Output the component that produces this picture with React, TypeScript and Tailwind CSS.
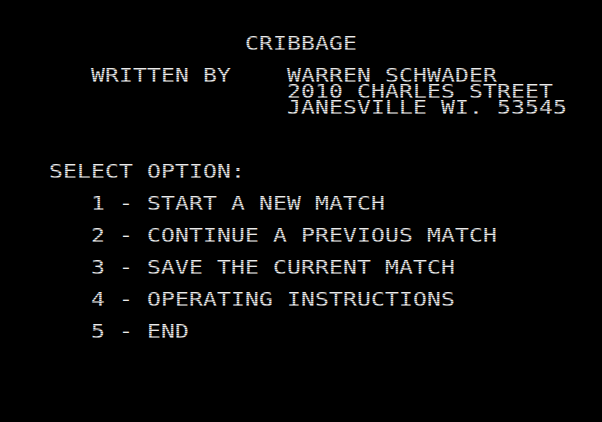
import React from "react";

const ROWS: string[] = [
  "",
  "                CRIBBAGE",
  "",
  "     WRITTEN BY    WARREN SCHWADER",
  "                   2010 CHARLES STREET",
  "                   JANESVILLE WI. 53545",
  "",
  "",
  "",
  "  SELECT OPTION:",
  "",
  "     1 - START A NEW MATCH",
  "",
  "     2 - CONTINUE A PREVIOUS MATCH",
  "",
  "     3 - SAVE THE CURRENT MATCH",
  "",
  "     4 - OPERATING INSTRUCTIONS",
  "",
  "     5 - END",
];

export default function App() {
  return (
    <div className="relative w-[602px] h-[422px] overflow-hidden bg-black">
      <div className="pl-[21px] pt-[20px]">
        {/* 40-column text page: 14px cells, 16px rows (glyphs squashed vertically) */}
        <div className="origin-top-left scale-y-[0.8333] font-['DejaVu_Sans_Mono',monospace] text-[23px] leading-[19.2px] tracking-[0.15px] text-[#ececec]">
          {ROWS.map((row, i) => (
            <div key={i} className="h-[19.2px] whitespace-pre">
              {row}
            </div>
          ))}
        </div>
      </div>
      {/* CRT scanlines */}
      <div className="pointer-events-none absolute inset-0 bg-[repeating-linear-gradient(to_bottom,transparent_0px,transparent_1px,rgba(0,0,0,0.4)_1px,rgba(0,0,0,0.4)_2px)]" />
    </div>
  );
}
